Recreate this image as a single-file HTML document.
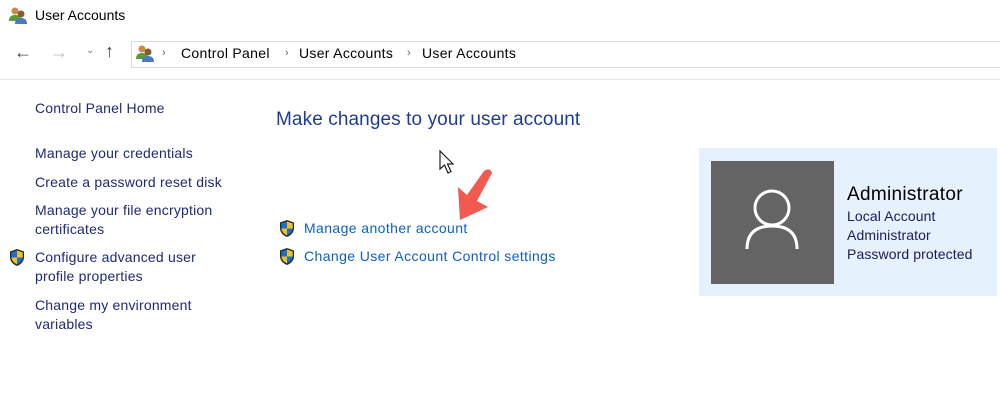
<!DOCTYPE html>
<html><head><style>
body{margin:0;width:1000px;height:420px;background:#fff;font-family:"Liberation Sans",sans-serif;position:relative;overflow:hidden}
.a{position:absolute;white-space:nowrap}
.l{color:#1e2a78;font-size:14px;line-height:19px;letter-spacing:0.2px}
.b{color:#0b5fc7;font-size:14px;letter-spacing:0.4px}
.c{font-size:14px;color:#000;top:45px;letter-spacing:0.3px}
.s{color:#666;font-size:11px;top:47px}
</style></head><body>
<svg class="a" style="left:8px;top:5px" width="20" height="20" viewBox="0 0 20 20"><circle cx="7" cy="6" r="3.5" fill="#c98a4a"/><path d="M1 16q0-6 6-6t6 6z" fill="#5a9a3a"/><circle cx="13" cy="9" r="3.5" fill="#8a5a30"/><path d="M7 19q0-6 6-6t6 6z" fill="#4a7ac0"/></svg>
<div class="a" style="left:35px;top:7px;font-size:14px;color:#000">User Accounts</div>
<div class="a" style="left:14px;top:42px;font-size:18px;color:#444">&#8592;</div>
<div class="a" style="left:50px;top:42px;font-size:18px;color:#bbb">&#8594;</div>
<div class="a" style="left:86px;top:45px;font-size:10px;color:#777">&#8964;</div>
<div class="a" style="left:105px;top:41px;font-size:18px;color:#444">&#8593;</div>
<div class="a" style="left:131px;top:41px;width:880px;height:25px;border:1px solid #d9d9d9"></div>
<svg class="a" style="left:135px;top:43px" width="20" height="20" viewBox="0 0 20 20"><circle cx="7" cy="6" r="3.5" fill="#c98a4a"/><path d="M1 16q0-6 6-6t6 6z" fill="#5a9a3a"/><circle cx="13" cy="9" r="3.5" fill="#8a5a30"/><path d="M7 19q0-6 6-6t6 6z" fill="#4a7ac0"/></svg>
<div class="a s" style="left:162px">&#8250;</div>
<div class="a c" style="left:181px">Control Panel</div>
<div class="a s" style="left:285px">&#8250;</div>
<div class="a c" style="left:299px">User Accounts</div>
<div class="a s" style="left:407px">&#8250;</div>
<div class="a c" style="left:422px">User Accounts</div>
<div class="a" style="left:0;top:79px;width:1000px;height:1px;background:#e8e8e8"></div>

<div class="a l" style="left:35px;top:99px">Control Panel Home</div>
<div class="a l" style="left:35px;top:144px">Manage your credentials</div>
<div class="a l" style="left:35px;top:173px">Create a password reset disk</div>
<div class="a l" style="left:35px;top:201px">Manage your file encryption<br>certificates</div>
<div class="a l" style="left:35px;top:248px">Configure advanced user<br>profile properties</div>
<div class="a l" style="left:35px;top:296px">Change my environment<br>variables</div>

<svg class="a" style="left:8px;top:248px" width="18" height="19" viewBox="0 0 18 19"><path d="M9 1L2 3.5V9q0 6 7 9q7-3 7-9V3.5z" fill="#2a2a2a"/><path d="M9 2.5L9 9.5H3.3V4.4z" fill="#1c6fd0"/><path d="M9 2.5L14.7 4.4V9.5H9z" fill="#f4c020"/><path d="M3.3 9.5H9V16.5Q4 14 3.3 9.5z" fill="#f4c020"/><path d="M9 9.5H14.7Q14 14 9 16.5z" fill="#1c6fd0"/></svg>
<svg class="a" style="left:278px;top:219px" width="18" height="19" viewBox="0 0 18 19"><path d="M9 1L2 3.5V9q0 6 7 9q7-3 7-9V3.5z" fill="#2a2a2a"/><path d="M9 2.5L9 9.5H3.3V4.4z" fill="#1c6fd0"/><path d="M9 2.5L14.7 4.4V9.5H9z" fill="#f4c020"/><path d="M3.3 9.5H9V16.5Q4 14 3.3 9.5z" fill="#f4c020"/><path d="M9 9.5H14.7Q14 14 9 16.5z" fill="#1c6fd0"/></svg>
<svg class="a" style="left:278px;top:247px" width="18" height="19" viewBox="0 0 18 19"><path d="M9 1L2 3.5V9q0 6 7 9q7-3 7-9V3.5z" fill="#2a2a2a"/><path d="M9 2.5L9 9.5H3.3V4.4z" fill="#1c6fd0"/><path d="M9 2.5L14.7 4.4V9.5H9z" fill="#f4c020"/><path d="M3.3 9.5H9V16.5Q4 14 3.3 9.5z" fill="#f4c020"/><path d="M9 9.5H14.7Q14 14 9 16.5z" fill="#1c6fd0"/></svg>

<div class="a" style="left:276px;top:109px;font-size:19px;color:#1e3c96;letter-spacing:0.1px">Make changes to your user account</div>
<div class="a b" style="left:304px;top:220px">Manage another account</div>
<div class="a b" style="left:304px;top:248px">Change User Account Control settings</div>

<svg class="a" style="left:438px;top:149px" width="20" height="26" viewBox="0 0 20 26"><path d="M2 2V20L6.5 16L10 24L13 22.5L9.5 15H15z" fill="#fff" stroke="#222" stroke-width="1.2"/></svg>
<svg class="a" style="left:450px;top:165px" width="50" height="60" viewBox="0 0 50 60"><path d="M10 55L8 22L17 30L34 6Q40 2 42 8L27 36L38 42z" fill="#f05a50"/></svg>

<div class="a" style="left:699px;top:148px;width:298px;height:148px;background:#e5f1fc"></div>
<div class="a" style="left:711px;top:161px;width:123px;height:123px;background:#646464"></div>
<svg class="a" style="left:711px;top:161px" width="123" height="123" viewBox="0 0 123 123"><circle cx="61" cy="47" r="17" fill="none" stroke="#fff" stroke-width="3"/><path d="M36 88Q36 65 61 65Q86 65 86 88" fill="none" stroke="#fff" stroke-width="3"/></svg>
<div class="a" style="left:847px;top:184px;font-size:19px;color:#000;letter-spacing:0.3px">Administrator</div>
<div class="a" style="left:847px;top:207px;font-size:14px;line-height:19px;color:#1a1a5a;letter-spacing:0.1px">Local Account<br>Administrator<br>Password protected</div>
</body></html>
